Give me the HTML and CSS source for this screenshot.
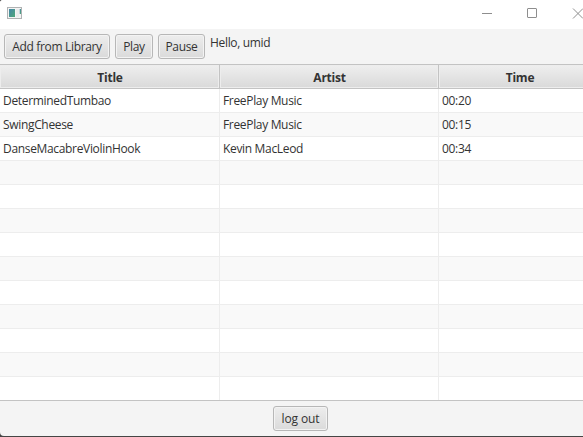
FILE: index.html
```html
<!DOCTYPE html>
<html lang="en">
<head>
<meta charset="utf-8">
<title>Music player</title>
<link rel="stylesheet" href="styles.css">
</head>
<body>
<div class="window">
  <header class="titlebar">
    <svg class="app-icon" width="15" height="12" viewBox="0 0 15 12">
      <defs><linearGradient id="pane" x1="0" y1="0" x2="1" y2="1"><stop offset="0" stop-color="#4586a8"/><stop offset="1" stop-color="#4fa878"/></linearGradient></defs>
      <rect x=".5" y=".5" width="14" height="11" fill="#f4f4f4" stroke="#b0b2b3"/>
      <rect x="2" y="2" width="6" height="8" fill="url(#pane)"/>
      <path d="M9 3h3M9 5h3M9 7h3M9 9h3" stroke="#e2e5e5"/>
      <rect x="12.7" y="2" width="1.3" height="5" fill="url(#pane)"/>
    </svg>
    <svg class="controls" width="101" height="12" viewBox="0 0 101 12" fill="none" stroke="#8e8e8e">
      <path d="M0 5.5h10"/>
      <rect x="45.5" y=".5" width="9" height="9" rx=".5"/>
      <path d="M91 .5l10 10M101 .5l-10 10"/>
    </svg>
  </header>
  <div class="toolbar">
    <button class="button add"><span>Add from Library</span></button>
    <button class="button play"><span>Play</span></button>
    <button class="button pause"><span>Pause</span></button>
    <span class="greeting">Hello, umid</span>
  </div>
  <main class="table">
    <div class="row head"><div>Title</div><div>Artist</div><div>Time</div></div>
    <div class="row"><div>DeterminedTumbao</div><div>FreePlay Music</div><div>00:20</div></div>
    <div class="row"><div>SwingCheese</div><div>FreePlay Music</div><div>00:15</div></div>
    <div class="row"><div>DanseMacabreViolinHook</div><div>Kevin MacLeod</div><div>00:34</div></div>
    <div class="row"><div></div><div></div><div></div></div>
    <div class="row"><div></div><div></div><div></div></div>
    <div class="row"><div></div><div></div><div></div></div>
    <div class="row"><div></div><div></div><div></div></div>
    <div class="row"><div></div><div></div><div></div></div>
    <div class="row"><div></div><div></div><div></div></div>
    <div class="row"><div></div><div></div><div></div></div>
    <div class="row"><div></div><div></div><div></div></div>
    <div class="row"><div></div><div></div><div></div></div>
    <div class="row"><div></div><div></div><div></div></div>
  </main>
  <footer class="footer"><button class="button logout"><span>log out</span></button></footer>
</div>
</body>
</html>
```
FILE: styles.css
```css
* { box-sizing: border-box; }
body { margin: 0; overflow: hidden; background: #454545; }
.window {
  width: 583px;
  height: 436px;
  display: flex;
  flex-direction: column;
  overflow: hidden;
  border-radius: 3px 0 0 4px;
  background: #f4f4f4;
  color: #333;
  font: 12px/16px "Open Sans", "Noto Sans", sans-serif;
  letter-spacing: -0.33px;
}
.titlebar {
  flex: 0 0 29px;
  display: flex;
  justify-content: space-between;
  align-items: flex-start;
  padding: 7px 0 0 7px;
  background: #fff;
}
.controls { flex: none; margin: 1px 0 0; }
.toolbar {
  flex: 0 0 35px;
  display: flex;
  align-items: flex-start;
  gap: 5px;
  padding: 5px 4px 0;
}
.button {
  height: 25px;
  padding: 1px 0 0;
  border: 1px solid #b7b7b7;
  border-radius: 3px;
  background: linear-gradient(#ededed, #dadada);
  box-shadow: inset 0 0 0 1px #f3f3f3;
  color: #333;
  font: inherit;
  letter-spacing: inherit;
  white-space: nowrap;
}
.add { width: 106px; }
.play { width: 38px; }
.pause { width: 47px; }
.logout { width: 55px; letter-spacing: -0.1px; }
.greeting { margin-top: 1px; }
.table {
  flex: 0 0 337px;
  overflow: hidden;
  border-top: 1px solid #c3c3c3;
  border-bottom: 1px solid #c3c3c3;
  background: #fff;
}
.row {
  display: grid;
  grid-template-columns: 220px 219px 162px;
  width: 601px;
  height: 24px;
  background: #fff;
}
.row:nth-child(odd) { background: #f9f9f9; }
.row > div {
  padding: 4px 3px 3px;
  border-right: 1px solid #ededed;
  border-bottom: 1px solid #ededed;
  white-space: nowrap;
}
.row.head > div {
  padding: 5px 3px 2px 4px;
  border-color: #c3c3c3;
  background: linear-gradient(#efefef, #d9d9d9);
  box-shadow: inset 0 0 0 1px #ededed;
  font-weight: 700;
  letter-spacing: -0.25px;
  text-align: center;
}
.footer {
  flex: 0 0 35px;
  display: flex;
  justify-content: center;
  padding: 5px 0 0 18px;
}
```
